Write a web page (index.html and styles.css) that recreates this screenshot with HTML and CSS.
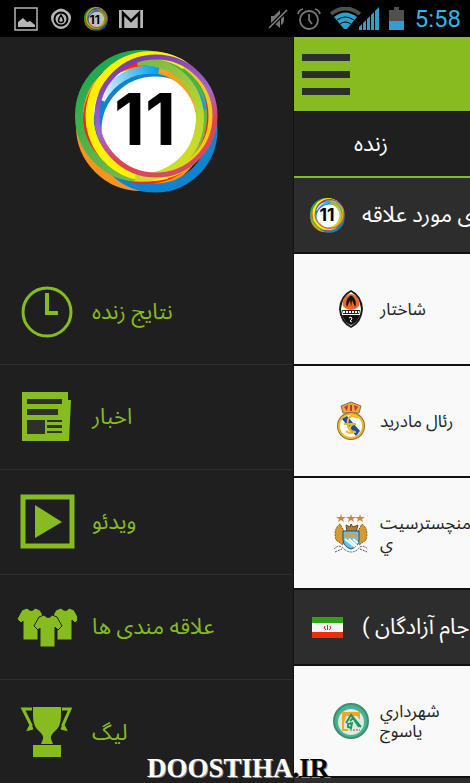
FILE: index.html
```
<!DOCTYPE html>
<html lang="fa">
<head>
    <meta charset="utf-8" />
    <meta name="viewport" content="width=device-width, initial-scale=1.0" />
    <title>نتایج زنده</title>
    <link rel="stylesheet" href="styles.css">
</head>
<body>

    <!-- shared logo -->
    <svg class="defs" width="0" height="0" aria-hidden="true">
        <defs>
            <linearGradient id="gPurple" x1="0.2" y1="0" x2="0.6" y2="1">
                <stop offset="0" stop-color="#7437ad" />
                <stop offset="0.5" stop-color="#a566cc" />
                <stop offset="0.75" stop-color="#e0434f" />
                <stop offset="1" stop-color="#d44a62" />
            </linearGradient>
            <linearGradient id="gLime" x1="0.3" y1="0" x2="0.6" y2="1">
                <stop offset="0" stop-color="#7fbb45" />
                <stop offset="0.5" stop-color="#b3d334" />
                <stop offset="1" stop-color="#d3e021" />
            </linearGradient>
            <linearGradient id="gBlue" x1="0" y1="0.4" x2="0.6" y2="0.3">
                <stop offset="0" stop-color="#d9f1fb" />
                <stop offset="1" stop-color="#0b9fe8" />
            </linearGradient>
            <linearGradient id="gGreen" x1="0" y1="0" x2="0.5" y2="1">
                <stop offset="0" stop-color="#10a651" />
                <stop offset="1" stop-color="#76bb45" />
            </linearGradient>
            <symbol id="rings" viewBox="0 0 144 144">
                <circle cx="72" cy="72" r="60" fill="#fff" />
                <g fill="none">
                    <circle cx="66" cy="76" r="61" stroke="#f7941d" stroke-width="8" />
                    <circle cx="80" cy="80" r="58" stroke="#0d84d0" stroke-width="9" />
                    <circle cx="71" cy="71" r="59" stroke="#f9260d" stroke-width="8" />
                    <circle cx="66" cy="66" r="62" stroke="url(#gGreen)" stroke-width="8" />
                    <path d="M26 50A55 55 0 0 1 128 60" stroke="url(#gBlue)" stroke-width="8" />
                    <path d="M84 20A54 54 0 0 1 124 62" stroke="#f9a11b" stroke-width="7" />
                    <circle cx="76" cy="66" r="61" stroke="#fdc80e" stroke-width="7" />
                    <path d="M110 16A61 61 0 1 0 92 125" stroke="#fff200" stroke-width="8" />
                    <path d="M60 127A58 58 0 0 0 124 78A56 56 0 0 0 62 12" stroke="url(#gLime)" stroke-width="8" />
                    <circle cx="81" cy="66" r="59" stroke="url(#gPurple)" stroke-width="5" />
                </g>
            </symbol>
        </defs>
    </svg>

    <div class="statusbar">
        <div class="status-left">
            <svg width="24" height="24" viewBox="0 0 24 24"><path d="M1 1h22v22H1z" fill="none" stroke="#b5b5b5" stroke-width="1.5" /><path d="M4 20v-5l5-4 4 4 3-1 5 4v2z" fill="#b5b5b5" /></svg>
            <svg width="24" height="24" viewBox="0 0 24 24"><path d="M6 4Q12-1 18 4Q24 8 21 15Q18 22 12 22Q6 22 3 15Q0 8 6 4z" fill="#b5b5b5" /><circle cx="12" cy="12" r="6.500" fill="#b5b5b5" stroke="#000" stroke-width="2" /><path d="M12 8q5 7 0 7.500q-5-.5 0-7.500z" fill="none" stroke="#000" stroke-width="1.500" /></svg>
            <svg class="faded" width="24" height="24" viewBox="0 0 144 144"><use href="#rings" width="144" height="144" /><text x="64" y="100" class="digits">11</text></svg>
            <svg width="24" height="24" viewBox="0 0 24 24"><path d="M0 3h24v18H0z" fill="#b5b5b5" /><path d="M4 21V6l8 8 8-8v15" fill="none" stroke="#050505" stroke-width="2.500" /></svg>
        </div>
        <div class="status-right">
            <svg width="20" height="24" viewBox="0 0 20 24"><path d="M3 9h3l6-6v18l-6-5H3zM13 6q3 1 3 6t-3 6z" fill="#777" /><path d="M1 21L19 3" stroke="#000" stroke-width="4" /><path d="M1 21L19 3" stroke="#888" stroke-width="1.500" /></svg>
            <svg width="24" height="24" viewBox="0 0 24 24" fill="none" stroke="#777" stroke-width="1.800"><circle cx="12" cy="13" r="9" /><path d="M12 7v6l3 4M1 7q1-4 5-5M23 7q-1-4-5-5" /></svg>
            <svg width="50" height="24" viewBox="0 0 50 24"><path d="M1 7Q15-4 30 7" fill="none" stroke="#505050" stroke-width="4" /><path d="M4 10Q15 1 27 10L17 22h-3z" fill="#2f9fcb" /><path d="M7 13Q15 7 24 13M10 17q5-4 11 0" fill="none" stroke="#000" stroke-width="1" /><path d="M29 23v-3l3-3v6zM33 23v-7l3-3v10zM37 23V12l3-3v14zM41 23V8l3-3v18zM45 23V4l4-4v23z" fill="#2f9fcb" /></svg>
            <svg width="15" height="24" viewBox="0 0 15 24"><path d="M0 3h5V0h5v3h5v11H0z" fill="#505050" /><path d="M0 14h15v9H0z" fill="#2f9fcb" /></svg>
            <span class="clock">5:58</span>
        </div>
    </div>

    <div class="screen">
        <nav class="drawer">
            <div class="drawer-logo">
                <svg width="144" height="144" viewBox="0 0 144 144"><use href="#rings" width="144" height="144" /><text x="70" y="95" class="digits">11</text></svg>
            </div>
            <a href="#" class="menu-item">
                <svg width="60" height="60" viewBox="0 0 60 60" fill="none" stroke="#86bc20"><circle cx="30" cy="30" r="24" stroke-width="3" /><path d="M30 11v20h11" stroke-width="4" /></svg>
                <span dir="rtl">نتایج زنده</span>
            </a>
            <a href="#" class="menu-item">
                <svg width="60" height="60" viewBox="0 0 60 60"><path d="M5 5h46v8h3l-2 41H5z" fill="#86bc20" /><path d="M10 12h35v5H10zM10 22h31v6H10zM10 33h18v14H10zM30 33h15v2H30zM30 38h15v3H30zM30 44h15v2H30z" fill="#2e3129" /></svg>
                <span dir="rtl">اخبار</span>
            </a>
            <a href="#" class="menu-item">
                <svg width="60" height="60" viewBox="0 0 60 60"><path d="M6 5h49v49H6z" fill="none" stroke="#86bc20" stroke-width="5" /><path d="M18 13l27 17-27 16z" fill="#86bc20" /></svg>
                <span dir="rtl">ویدئو</span>
            </a>
            <a href="#" class="menu-item">
                <svg width="60" height="60" viewBox="0 0 60 60" fill="#86bc20" stroke="#1f1f1f">
                    <path id="shirt" d="M9 11q5 5 8 0l5 2 5 9-4 4-3-3v20H5V24l-2 2-4-4 5-9z" transform="translate(1)" />
                    <use href="#shirt" x="34" />
                    <use href="#shirt" x="17" y="7" />
                </svg>
                <span dir="rtl">علاقه مندی ها</span>
            </a>
            <a href="#" class="menu-item">
                <svg width="60" height="60" viewBox="0 0 60 60"><path d="M16 4h28v9q0 11-7 16-4 4-3 7l2 5H24l2-5q1-3-3-7-7-5-7-16z" fill="#86bc20" /><path d="M15 6H6l8 16-2 4 4-1M45 6h8l-7 16 2 4-4-1" fill="none" stroke="#86bc20" stroke-width="3" /><path d="M16 42h28v12H16z" fill="#86bc20" /></svg>
                <span dir="rtl">لیگ</span>
            </a>
        </nav>

        <main class="content">
            <header class="topbar">
                <button type="button" class="burger" aria-label="منو"><i></i><i></i><i></i></button>
            </header>
            <button type="button" class="tab" dir="rtl">زنده</button>

            <h2 class="group">
                <svg width="35" height="35" viewBox="0 0 144 144"><use href="#rings" width="144" height="144" /><text x="70" y="95" class="digits">11</text></svg>
                <span dir="rtl">ی مورد علاقه</span>
            </h2>
            <ul class="teams">
                <li>
                    <svg width="36" height="40" viewBox="0 0 36 40"><path d="M18 1Q29 6 30 20 29 34 18 39 7 34 6 20 7 6 18 1z" fill="#1a1a1a" /><path d="M18 3Q27 8 28 20 27 32 18 37 9 32 8 20 9 8 18 3z" fill="#fff" /><path d="M11 10Q6 19 18 21 30 19 25 10 22 5 18 5t-7 5z" fill="#f26522" /><path d="M14 18q-2-5 1-9 3-5 6 0 3 4 1 9l-3-7-1 7-1-7z" fill="#111" /><path d="M9 21h18l-1 4H10z" fill="#222" /><path d="M10 23h16" stroke="#fff" stroke-width="2" stroke-dasharray="2 1" /><path d="M9 26h18q-3 8-9 10-6-2-9-10z" fill="#111" /><path d="M16 29l2-1 1 2-2 2 2 1" fill="none" stroke="#fff" /></svg>
                    <span dir="rtl">شاختار</span>
                </li>
                <li>
                    <svg width="36" height="40" viewBox="0 0 36 40"><path d="M8 5l5-2 5-2 5 2 5 2-2 7H10z" fill="#e9a936" stroke="#8b6a5a" /><path d="M11 6l4-2-1 6zM21 4l4 2-3 4zM17 4h2v6h-2z" fill="#d3264c" /><circle cx="18" cy="25" r="12" fill="#fff" stroke="#87702f" stroke-width="4" /><circle cx="18" cy="25" r="12" fill="#fff" stroke="#f0b52e" stroke-width="2" /><path d="M9 18l5-3 13 15-4 5z" fill="#194fa5" /><path d="M25 17q-8-5-10 2t4 12M23 23H11M23 23q-6 0-6 4t6 4M13 30q5 4 9 0" fill="none" stroke="#f0b52e" stroke-width="2" /></svg>
                    <span dir="rtl">رئال مادرید</span>
                </li>
                <li>
                    <svg width="36" height="40" viewBox="0 0 36 40"><path id="star" d="M8 1l1 3h4l-3 2 1 3-3-2-3 2 1-3-3-2h4z" fill="#c58b30" /><use href="#star" x="10" /><use href="#star" x="19" /><path d="M7 11q-7 5-4 16l7 5 1-14zM29 11q7 5 4 16l-7 5-1-14z" fill="#d69b30" stroke="#775014" stroke-dasharray="2 1" /><path d="M13 12l4 2 1-3 2 3 5-2-2 7H14z" fill="#b97c24" stroke="#674919" /><path d="M10 18h16v9q-1 7-8 9-7-2-8-9z" fill="#64c3e8" stroke="#294b65" /><path d="M12 20h12v4H12z" fill="#d2a348" /><path d="M12 26l10 8M16 26l8 7M20 26l5 4" stroke="#fff" stroke-width="2" /><path d="M1 36q5-5 9-1t8 4q5 0 8-4t9 1M2 39l7-3M27 36l7 3" fill="none" stroke="#555" stroke-dasharray="2 1" /></svg>
                    <span dir="rtl">منچسترسيت<br>ي</span>
                </li>
            </ul>

            <h2 class="group">
                <svg width="35" height="35" viewBox="0 0 35 35"><path d="M2 7h31v21H2z" fill="#f6f6f6" /><path d="M2 7h31v6H2z" fill="#2fa316" /><path d="M2 22h31v6H2z" fill="#ee2c11" /><path d="M15 16q-2 2 1 4M20 16q2 2-1 4M17.500 15v5" fill="none" stroke="#e02020" /></svg>
                <span dir="rtl">جام آزادگان )</span>
            </h2>
            <ul class="teams">
                <li>
                    <svg width="36" height="40" viewBox="0 0 36 40"><circle cx="18" cy="20" r="17" fill="#48b293" stroke="#3d8d77" stroke-width="2" /><circle cx="18" cy="21" r="13" fill="#d8eee2" /><path d="M9 11h18v8l-3-4H13l-2 7v6h4v2H9z" fill="#f3a81c" /><path d="M13 22l5-8 10 12M17 20l3-3 6 9M15 23l4-1-1 5-3-1z" fill="none" stroke="#239564" stroke-width="2" /><path d="M17 29h10" stroke="#e78a76" stroke-width="2" stroke-dasharray="2 1" /></svg>
                    <span dir="rtl">شهرداري<br>ياسوج</span>
                </li>
            </ul>
        </main>
    </div>

    <div class="watermark">DOOSTIHA<span>.IR</span></div>

</body>
</html>
```
FILE: styles.css
```
* {
    box-sizing: border-box;
}

body {
    margin: 0;
    min-height: 100vh;
    display: flex;
    flex-direction: column;
    position: relative;
    overflow: hidden;
    background-color: #1f1f1f;
    font-family: Roboto, "Noto Sans Arabic", "Noto Sans", "DejaVu Sans", sans-serif;
}

svg {
    flex: none;
    display: block;
}

.defs {
    position: absolute;
}

.digits {
    font: 700 72px Inter, sans-serif;
    text-anchor: middle;
}

.faded {
    opacity: 0.75;
}

/* status bar */
.statusbar {
    display: flex;
    justify-content: space-between;
    align-items: center;
    height: 37px;
    padding: 0 9px 0 14px;
    background-color: #000;
}

.status-left {
    display: flex;
    gap: 11px;
}

.status-right {
    display: flex;
    align-items: center;
    gap: 9px;
}

.clock {
    margin-left: 2px;
    color: #33b5e5;
    font-size: 24px;
    line-height: 28px;
}

.screen {
    flex: 1;
    display: flex;
}

/* side menu */
.drawer {
    flex: 0 0 294px;
    border-right: 1px solid #111;
}

.drawer-logo {
    display: flex;
    justify-content: center;
    height: 223px;
    padding-top: 13px;
}

.menu-item {
    display: flex;
    align-items: center;
    gap: 15px;
    height: 105px;
    padding-left: 17px;
    border-bottom: 1px solid #2e2e2e;
    color: #86bc20;
    font-size: 22px;
    line-height: 26px;
    text-decoration: none;
}

.menu-item:last-child {
    border-bottom: none;
}

/* results */
.content {
    flex: 1;
    min-width: 0;
    overflow: hidden;
    background-color: #2d2d2d;
}

.topbar {
    height: 75px;
    padding: 15px 8px;
    background-color: #86bc20;
    border-bottom: 1px solid #111;
}

.burger {
    display: flex;
    flex-direction: column;
    gap: 10px;
    width: 48px;
    padding: 2px 0;
    border: none;
    background: none;
}

.burger i {
    width: 100%;
    height: 7px;
    background-color: #2d2d2d;
}

.tab {
    display: block;
    width: 100%;
    height: 66px;
    padding: 0 80px 0 58px;
    border: none;
    border-bottom: 2px solid #86bc20;
    background-color: #1f1f1f;
    color: #fff;
    font-family: inherit;
    font-size: 22px;
    white-space: nowrap;
}

.group {
    display: flex;
    align-items: center;
    gap: 17px;
    height: 76px;
    margin: 0;
    padding-left: 16px;
    border-bottom: 2px solid #111;
    color: #fff;
    font-size: 22px;
    font-weight: normal;
    white-space: nowrap;
}

.teams {
    margin: 0;
    padding: 0;
    list-style: none;
}

.teams li {
    display: flex;
    align-items: center;
    gap: 11px;
    height: 112px;
    padding-left: 39px;
    border-bottom: 2px solid #111;
    background-color: #f9f9f9;
    color: #222;
    font-size: 17px;
    line-height: 20px;
    white-space: nowrap;
}

.teams span {
    text-align: left;
}

.watermark {
    position: absolute;
    left: 147px;
    bottom: 0;
    color: #fff;
    font: bold 27px/34px "Liberation Serif", serif;
    text-shadow: 1px 1px 0 #888;
}

.watermark span {
    color: #000;
}
```
